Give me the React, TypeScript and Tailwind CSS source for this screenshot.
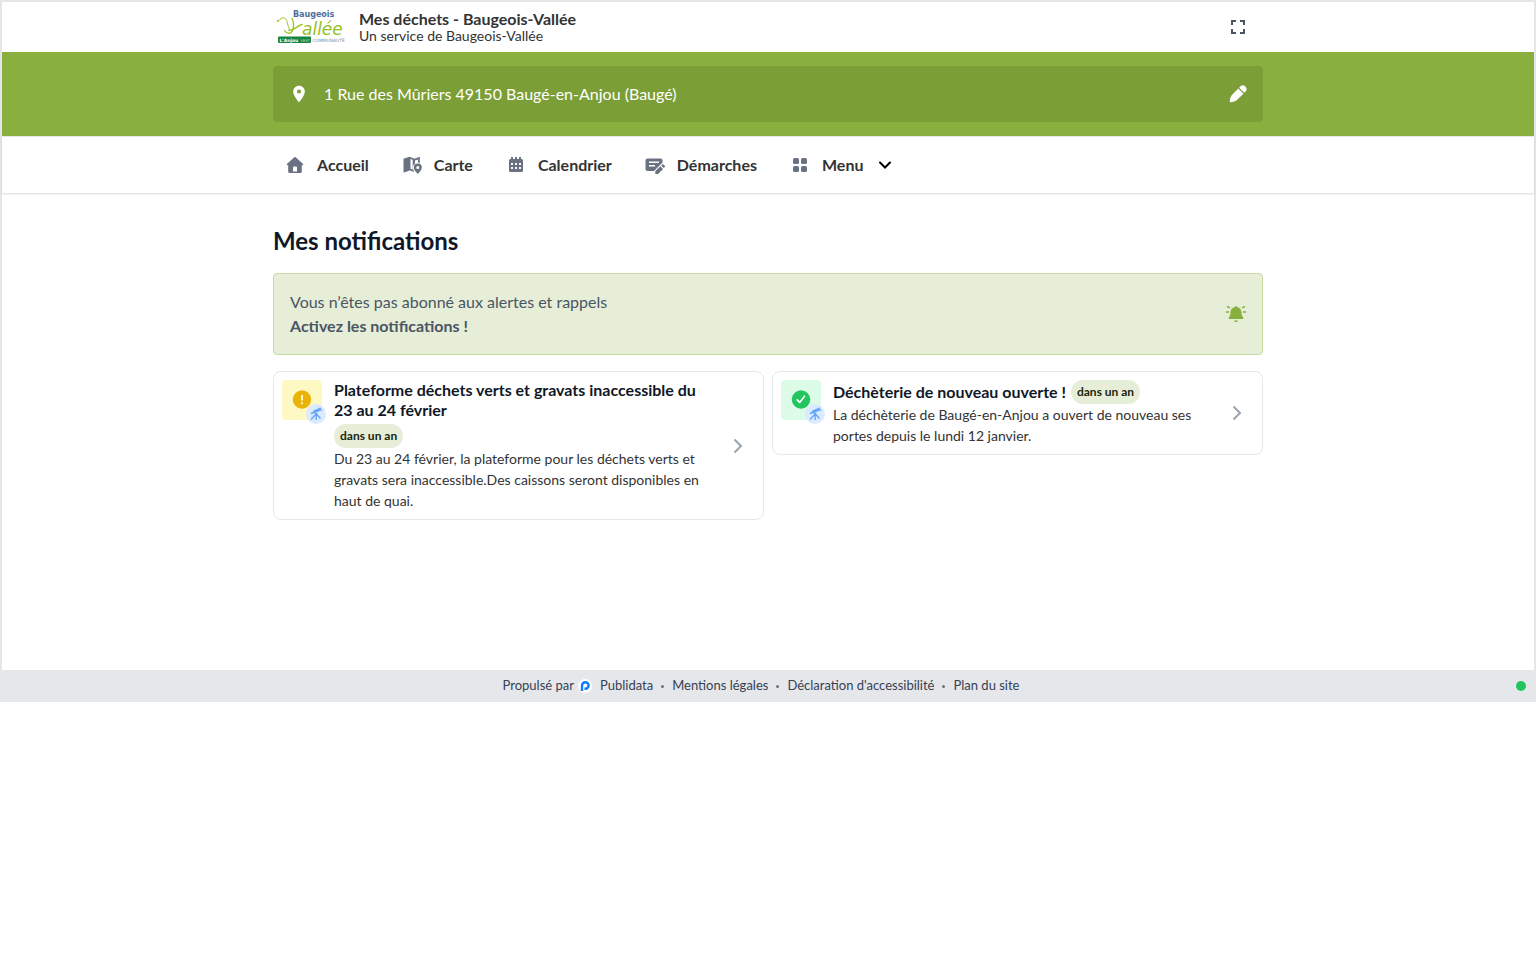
import React from "react";
import { MdFullscreen, MdLocationOn } from "react-icons/md";

type IconProps = { className?: string };

function Logo() {
  return (
    <svg viewBox="0 0 70 36" className="w-[70px] h-9" role="img" aria-label="Baugeois-Vallée">
      <g fill="none" stroke="#a2c62c" strokeLinecap="round" strokeLinejoin="round">
        <path d="M1.500 12c2-3 5-4 7-2.500 2 2 1.500 6 4 11" strokeWidth="1" />
        <path d="M7.500 21.500c2.500 4 7 3.500 8.500-1 1-4 .5-8-1-11" strokeWidth="1.400" />
        <path d="M12 21c4 2 8-4.500 13-5.500" strokeWidth="1.600" />
      </g>
      <circle cx="1" cy="12" r="1.100" fill="#a2c62c" />
      <text x="25" y="25.500" fill="#95c11f" fontSize="17" fontStyle="italic" fontFamily="DejaVu Sans, sans-serif">allée</text>
      <text x="16" y="8" fill="#4c6f9b" fontSize="8" fontWeight="700" fontFamily="DejaVu Sans, sans-serif">Baugeois</text>
      <rect x="1" y="27.500" width="33" height="6.500" rx="1" fill="#16843f" />
      <text x="2.500" y="32.500" fill="#fff" fontSize="4.500" fontWeight="700" fontFamily="DejaVu Sans, sans-serif">L'Anjou</text>
      <text x="23.500" y="32.500" fill="#b9dcc4" fontSize="3.800" fontFamily="DejaVu Sans, sans-serif">VERT</text>
      <text x="35.500" y="32.500" fill="#6d90b0" fontSize="4.400" fontFamily="DejaVu Sans, sans-serif">COMMUNAUTÉ</text>
    </svg>
  );
}

function HomeIcon({ className }: IconProps) {
  return (
    <svg viewBox="0 0 20 20" fill="currentColor" className={className} aria-hidden="true">
      <path fillRule="evenodd" d="M9.300 2.300a1 1 0 0 1 1.400 0L17.900 8.800c.6.600.3 1.400-.5 1.400h-.6v6.300a1.500 1.500 0 0 1-1.500 1.500H4.700a1.500 1.500 0 0 1-1.500-1.500v-6.300h-.6c-.8 0-1.100-.8-.5-1.400L9.300 2.300ZM8 12.500V16.500h4v-4a1 1 0 0 0-1-1H9a1 1 0 0 0-1 1Z" />
    </svg>
  );
}

function MapIcon({ className }: IconProps) {
  return (
    <svg viewBox="0 0 20 20" fill="currentColor" className={className} aria-hidden="true">
      <path fillRule="evenodd" d="M1.500 3.800 7.500 1.800v13.700L2.300 17.400a.6.600 0 0 1-.8-.6V3.800ZM7.500 1.800l5 2L17 1.900a.6.600 0 0 1 .8.600V8a5 5 0 0 0-1.800-.5V4.500L13 5.600v2.900a5 5 0 0 0-2 4.700l1 3.800-4.500-1.700V1.800ZM8.500 3.900v9.900l2.200.9V4.800l-2.200-.9Z" />
      <path fillRule="evenodd" d="M15.800 8.600a4 4 0 0 1 4 4c0 2.600-2.400 4.700-4 6.400-1.600-1.700-4-3.800-4-6.400a4 4 0 0 1 4-4Zm0 2.500a1.500 1.500 0 1 0 0 3 1.500 1.500 0 0 0 0-3Z" />
    </svg>
  );
}

function CalendarIcon({ className }: IconProps) {
  return (
    <svg viewBox="0 0 20 20" className={className} aria-hidden="true">
      <path fill="currentColor" d="M5 2h2v2h2V2h2v2h2V2h2v2h.5A1.500 1.500 0 0 1 17 5.500v10a1.500 1.500 0 0 1-1.500 1.500h-11A1.500 1.500 0 0 1 3 15.500v-10A1.500 1.500 0 0 1 4.500 4H5V2Z" />
      <g fill="#fff">
        <path d="M5 8h2v2H5zM9 8h2v2H9zM13 8h2v2h-2zM5 12h2v2H5zM9 12h2v2H9zM13 12h2v2h-2z" />
      </g>
    </svg>
  );
}

function FormIcon({ className }: IconProps) {
  return (
    <svg viewBox="0 0 20 20" className={className} aria-hidden="true">
      <rect x="0.500" y="3.500" width="17" height="12.500" rx="2" fill="currentColor" />
      <path d="M4 7.200h10M4 10.800h6" stroke="#fff" strokeWidth="1.500" />
      <path d="m9.300 19 .5-3.700L17 8l3.500 3.500L13.500 19z" fill="#fff" />
      <path d="M10.300 19v-2.700l5-5 2.700 2.700-5 5h-2.700ZM16.200 10.400l.9-.9a1 1 0 0 1 1.400 0l1.200 1.200a1 1 0 0 1 0 1.400l-.9.900-2.600-2.600Z" fill="currentColor" />
    </svg>
  );
}

function GridIcon({ className }: IconProps) {
  return (
    <svg viewBox="0 0 20 20" fill="currentColor" className={className} aria-hidden="true">
      <rect x="3" y="3" width="6" height="6" rx="1.500" />
      <rect x="11" y="3" width="6" height="6" rx="1.500" />
      <rect x="3" y="11" width="6" height="6" rx="1.500" />
      <rect x="11" y="11" width="6" height="6" rx="1.500" />
    </svg>
  );
}

function PencilIcon({ className }: IconProps) {
  return (
    <svg viewBox="0 0 20 20" fill="currentColor" className={className} aria-hidden="true">
      <path d="M10.300 4 16 9.700 8.500 17c-1.500 1.300-4 1.800-6.600 2.200a1 1 0 0 1-1.100-1.100C1.200 15.500 1.700 13 3 11.500L10.300 4ZM11.300 3l1.200-1.200a4 4 0 0 1 5.700 5.700L17 8.700 11.300 3Z" />
    </svg>
  );
}

function BellIcon({ className }: IconProps) {
  return (
    <svg viewBox="0 0 20 20" fill="currentColor" className={className} aria-hidden="true">
      <path d="M10 2a1 1 0 0 1 1 1c2.700.5 4.500 2.600 4.500 5.300 0 2.200.4 3.500 1.400 4.600.3.300.3.600.3 2.100H2.800c0-1.500 0-1.800.3-2.100 1-1.100 1.400-2.400 1.400-4.600C4.500 5.600 6.300 3.500 9 3a1 1 0 0 1 1-1ZM8 16.500h4a2 1.500 0 0 1-4 0Z" />
      <path d="M0 8h3.200M16.800 8H20M1 2.500l3 1.300M19 2.500l-3 1.300" stroke="currentColor" strokeWidth="1.400" />
    </svg>
  );
}

function TelescopeIcon({ className }: IconProps) {
  return (
    <svg viewBox="0 0 14 14" fill="none" stroke="currentColor" className={className} aria-hidden="true">
      <path d="m2 6.500 3-1.300" strokeWidth="1.600" />
      <path d="m4.500 5.200 7-3.200" strokeWidth="3" />
      <path d="m11 .5 1.800 3.500" strokeWidth="1" />
      <path d="M7.200 7v6M6.700 7.500 2 12.500M7.700 7.500l3.800 4" strokeWidth="1.300" />
      <circle cx="7.200" cy="7" r="1.300" fill="currentColor" stroke="none" />
    </svg>
  );
}

function StatusIcon({ type }: { type: "warning" | "success" }) {
  return (
    <svg viewBox="0 0 20 20" fill="none" className="w-5 h-5" aria-hidden="true">
      <circle cx="10" cy="9.500" r="9.200" fill={type === "warning" ? "#eab308" : "#22c55e"} />
      {type === "warning" ? (
        <path d="M10 5v5.500M10 12.200v2" stroke="#fef9c3" strokeWidth="2" />
      ) : (
        <path d="m6.200 9.900 2.500 2.500 4.800-6.200" stroke="#fff" strokeWidth="1.600" strokeLinecap="round" strokeLinejoin="round" />
      )}
    </svg>
  );
}

const navItems = [
  { label: "Accueil", icon: HomeIcon },
  { label: "Carte", icon: MapIcon },
  { label: "Calendrier", icon: CalendarIcon },
  { label: "Démarches", icon: FormIcon },
];

const notifications = [
  {
    id: 1,
    type: "warning" as const,
    title: "Plateforme déchets verts et gravats inaccessible du 23 au 24 février",
    date: "dans un an",
    text: "Du 23 au 24 février, la plateforme pour les déchets verts et gravats sera inaccessible.Des caissons seront disponibles en haut de quai.",
  },
  {
    id: 2,
    type: "success" as const,
    title: "Déchèterie de nouveau ouverte !",
    date: "dans un an",
    text: "La déchèterie de Baugé-en-Anjou a ouvert de nouveau ses portes depuis le lundi 12 janvier.",
  },
];

function NotificationCard({ item }: { item: (typeof notifications)[number] }) {
  return (
    <a href="#" className="flex items-center gap-2 p-2 border border-gray-200 rounded-lg">
      <div className="flex-1 min-w-0 flex items-start gap-3">
        <div className={`relative w-10 h-10 shrink-0 rounded-sm flex items-center justify-center ${item.type === "warning" ? "bg-[#fef9c3]" : "bg-[#dcfce7]"}`}>
          <StatusIcon type={item.type} />
          <span className="absolute -right-1 -bottom-1 w-5 h-5 rounded-full bg-[#dbeafe] text-[#60a5fa] flex items-center justify-center">
            <TelescopeIcon className="w-3.5 h-3.5" />
          </span>
        </div>
        <div className="flex-1 min-w-0">
          <div className="flex flex-wrap items-center gap-x-[5px] gap-y-1">
            <h2 className="text-base leading-5 font-bold text-gray-900">{item.title}</h2>
            <span className="px-1.5 rounded-full bg-[#e6eed8] text-xs leading-6 font-bold text-[#1b230c]">{item.date}</span>
          </div>
          <p className="text-sm leading-[21px] text-[#333]">{item.text}</p>
        </div>
      </div>
      <div className="w-[34px] shrink-0 flex justify-center">
        <svg viewBox="0 0 10 16" fill="none" className="w-2.5 h-4" stroke="#9ca3af" strokeWidth="2" aria-hidden="true">
          <path d="m1.500 1.500 6.500 6.500-6.500 6.500" />
        </svg>
      </div>
    </a>
  );
}

export default function App() {
  return (
    <div className="bg-white text-[#333] font-['Lato',sans-serif]">
      <div className="border-t-2 border-x-2 border-[#e5e5ea]">
        {/* Header */}
        <header className="h-[50px] flex items-center">
          <div className="w-full max-w-[990px] mx-auto flex items-center">
            <a href="#" className="flex items-center gap-3 pl-1">
              <Logo />
              <div>
                <div className="text-base leading-[18px] font-bold">Mes déchets - Baugeois-Vallée</div>
                <div className="text-sm leading-4">Un service de Baugeois-Vallée</div>
              </div>
            </a>
            <button aria-label="Plein écran" className="ml-auto mr-[13px] text-gray-600">
              <MdFullscreen className="w-6 h-6" />
            </button>
          </div>
        </header>

        {/* Address banner */}
        <div className="bg-[#89b03e] py-3.5">
          <button className="w-full max-w-[990px] h-14 mx-auto px-4 rounded-sm bg-[#7b9e36] text-white flex items-center text-left">
            <MdLocationOn className="w-5 h-5 mr-[15px] shrink-0" />
            <span className="flex-1">1 Rue des Mûriers 49150 Baugé-en-Anjou (Baugé)</span>
            <PencilIcon className="w-[18px] h-[18px]" />
          </button>
        </div>

        {/* Main nav */}
        <nav className="border-t border-gray-200 shadow-[0_1px_2px_0_rgb(0_0_0/0.15)]">
          <div className="w-full max-w-[990px] h-14 mx-auto flex items-center gap-[9px] font-bold">
            {navItems.map(({ label, icon: Icon }) => (
              <a key={label} href="#" className="flex items-center gap-3 px-3">
                <Icon className="w-5 h-5 text-gray-500" />
                {label}
              </a>
            ))}
            <button className="flex items-center gap-3 px-3">
              <GridIcon className="w-5 h-5 text-gray-500" />
              Menu
              <svg viewBox="0 0 20 20" fill="none" className="w-5 h-5" stroke="#000" strokeWidth="2" strokeLinecap="round" aria-hidden="true">
                <path d="m5 7.500 5 5 5-5" />
              </svg>
            </button>
          </div>
        </nav>

        <main className="w-full max-w-[990px] min-h-[477px] mx-auto pt-8">
          <h1 className="text-2xl leading-8 font-bold text-gray-900">Mes notifications</h1>
          <button className="w-full mt-4 p-4 flex items-center justify-between rounded-sm border border-[#c8dca2] bg-[#e6eed8] text-left text-gray-600">
            <span>
              <span className="block">Vous n’êtes pas abonné aux alertes et rappels</span>
              <strong className="block">Activez les notifications !</strong>
            </span>
            <BellIcon className="w-5 h-5 text-[#89b03e]" />
          </button>
          <div className="mt-4 grid grid-cols-2 gap-2 items-start">
            {notifications.map(item => (
              <NotificationCard key={item.id} item={item} />
            ))}
          </div>
        </main>
      </div>

      <footer className="h-8 bg-gray-200 text-[13px] text-gray-700 flex items-center">
        <div className="flex-1 flex items-center justify-center gap-2 pl-1.5">
          <a href="#" className="flex items-center gap-1">
            Propulsé par
            <svg viewBox="0 0 14 14" className="w-3.5 h-3.5 mr-1" aria-hidden="true">
              <circle cx="7" cy="7" r="7" fill="#fff" />
              <path d="M4 12V6.500a3.300 3.300 0 1 1 3.300 3.300H6.500" fill="none" stroke="#0a7cff" strokeWidth="2.400" />
            </svg>
            Publidata
          </a>
          <span className="w-[3px] h-[3px] rounded-full bg-gray-500" />
          <a href="#">Mentions légales</a>
          <span className="w-[3px] h-[3px] rounded-full bg-gray-500" />
          <a href="#">Déclaration d'accessibilité</a>
          <span className="w-[3px] h-[3px] rounded-full bg-gray-500" />
          <a href="#">Plan du site</a>
        </div>
        <span className="w-2.5 h-2.5 mr-2.5 rounded-full bg-[#22c55e]" />
      </footer>
    </div>
  );
}
